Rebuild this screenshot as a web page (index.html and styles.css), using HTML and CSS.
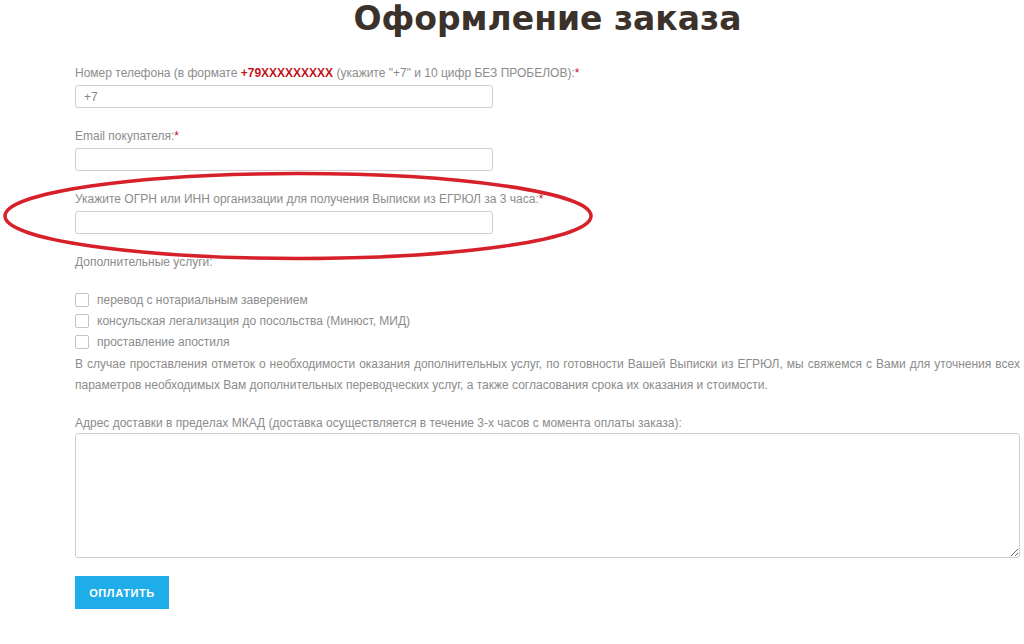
FILE: index.html
```html
<!DOCTYPE html>
<html lang="ru">
<head>
    <meta charset="UTF-8">
    <meta name="viewport" content="width=device-width, initial-scale=1.0">
    <title>Оформление заказа</title>
    <link rel="stylesheet" href="styles.css">
</head>
<body>
    <div class="container">
        <h1>Оформление заказа</h1>

        <form class="order-form" onsubmit="return false;">
            <div class="field">
                <label for="phone">Номер телефона (в формате <b class="accent">+79XXXXXXXXX</b> (укажите "+7" и 10 цифр БЕЗ ПРОБЕЛОВ):<span class="req">*</span></label>
                <input type="text" id="phone" value="+7">
            </div>

            <div class="field">
                <label for="email">Email покупателя:<span class="req">*</span></label>
                <input type="text" id="email">
            </div>

            <div class="field marked">
                <label for="ogrn">Укажите ОГРН или ИНН организации для получения Выписки из ЕГРЮЛ за 3 часа:<span class="req">*</span></label>
                <input type="text" id="ogrn">
                <svg class="circle-mark" width="600" height="104" viewBox="0 0 600 104">
                    <ellipse cx="298" cy="52" rx="293" ry="42.5" fill="none" stroke="#d6212b" stroke-width="3.5"/>
                </svg>
            </div>

            <div class="services">
                <p class="services-title">Дополнительные услуги:</p>
                <label class="check"><input type="checkbox"><span>перевод с нотариальным заверением</span></label>
                <label class="check"><input type="checkbox"><span>консульская легализация до посольства (Минюст, МИД)</span></label>
                <label class="check"><input type="checkbox"><span>проставление апостиля</span></label>
                <p class="note">В случае проставления отметок о необходимости оказания дополнительных услуг, по готовности Вашей Выписки из ЕГРЮЛ, мы свяжемся с Вами для уточнения всех параметров необходимых Вам дополнительных переводческих услуг, а также согласования срока их оказания и стоимости.</p>
            </div>

            <div class="field wide">
                <label for="address">Адрес доставки в пределах МКАД (доставка осуществляется в течение 3-х часов с момента оплаты заказа):</label>
                <textarea id="address"></textarea>
            </div>

            <button type="submit">Оплатить</button>
        </form>
    </div>
</body>
</html>
```

FILE: styles.css
```css
body {
    margin: 0;
    background: #fff;
    font-family: 'Liberation Sans', Arial, sans-serif;
    font-size: 12px;
    color: #8c8c8c;
}
.container {
    width: 945px;
    margin-left: 75px;
}
h1 {
    margin: 0;
    text-align: center;
    font-family: 'DejaVu Sans', Verdana, sans-serif;
    font-size: 33px;
    line-height: 38px;
    color: #3b322c;
}
.order-form {
    padding-top: 27px;
}
.field {
    margin-bottom: 20px;
}
.field label {
    display: block;
    line-height: 16px;
    margin-bottom: 4px;
}
.accent {
    color: #c4161c;
}
.req {
    color: #c4161c;
}
input[type="text"], textarea {
    display: block;
    box-sizing: border-box;
    width: 418px;
    height: 23px;
    margin: 0;
    padding: 3px 8px;
    border: 1px solid #cfcfcf;
    border-radius: 3px;
    font-family: inherit;
    font-size: 12px;
    color: #888;
    background: #fff;
}
.marked {
    position: relative;
}
.circle-mark {
    position: absolute;
    left: -75px;
    top: -27px;
    pointer-events: none;
}
.services {
    margin-top: 20px;
}
.services-title {
    margin: 0 0 19px;
    line-height: 16px;
}
.check {
    display: flex;
    align-items: center;
    gap: 8px;
    height: 21px;
}
.check input {
    appearance: none;
    width: 14px;
    height: 14px;
    margin: 0;
    border: 1px solid #c4c4c4;
    border-radius: 2px;
    background: #fff;
}
.note {
    margin: 2px 0 19px;
    line-height: 21px;
    text-align: justify;
}
.wide {
    margin-bottom: 18px;
}
.wide label {
    margin-bottom: 2px;
}
textarea {
    width: 945px;
    height: 125px;
    resize: vertical;
}
button {
    display: block;
    width: 94px;
    height: 33px;
    border: none;
    background: #1fadea;
    color: #fff;
    font-family: 'Liberation Sans', Arial, sans-serif;
    font-weight: bold;
    font-size: 11px;
    letter-spacing: 0.6px;
    text-transform: uppercase;
    cursor: pointer;
}
```
